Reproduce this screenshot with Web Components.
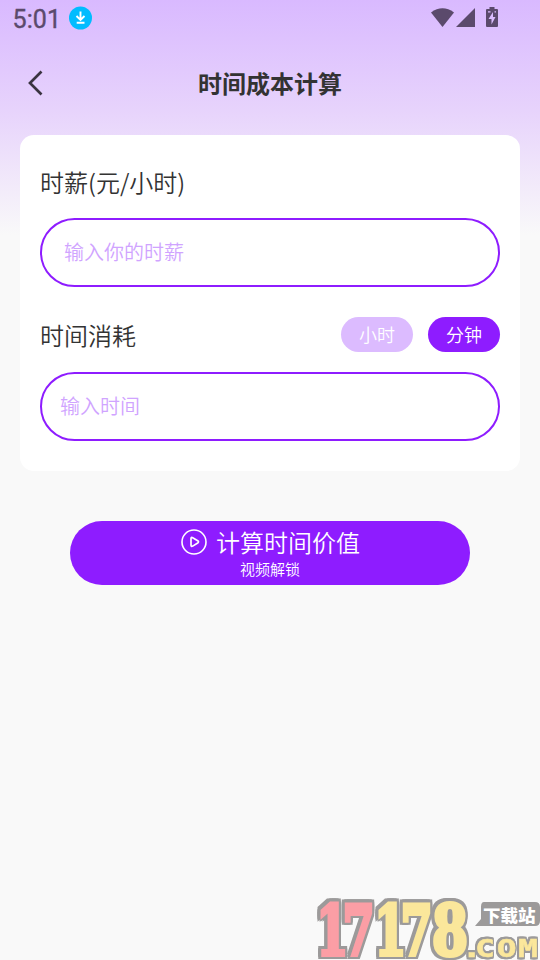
<!DOCTYPE html>
<html lang="zh-CN">
<head>
<meta charset="utf-8">
<title>时间成本计算</title>
<style>
html,body{margin:0;height:100%;overflow:hidden}
body{font-family:Roboto,"Noto Sans CJK SC",sans-serif;color:#333}
</style>
</head>
<body>
<time-cost-page></time-cost-page>
<script>
function define(name, html) {
  const template = document.createElement('template');
  template.innerHTML = html;
  customElements.define(name, class extends HTMLElement {
    constructor() {
      super();
      this.attachShadow({mode: 'open'}).appendChild(template.content.cloneNode(true));
    }
  });
}

define('status-bar', `
<style>
:host{display:flex;align-items:center;height:37px;padding:0 40px 0 12px;box-sizing:border-box;color:#5b4a6c}
.time{font:400 25px/37px Roboto,sans-serif;-webkit-text-stroke:.4px;padding:2px 0 0 .5px;letter-spacing:.1px;width:56.500px}
svg{display:block}
.down{margin-top:-1px}
.right{margin-left:auto;margin-top:-2px}
</style>
<span class="time">5:01</span>
<svg class="down" width="24" height="24" viewBox="0 0 24 24"><circle cx="11.5" cy="12" r="11.5" fill="#00bcff"/><path d="M11.500 5.500v8M7.500 10l4 4 4-4M7.700 16.800h7.800" fill="none" stroke="#fff" stroke-width="1.900"/></svg>
<svg class="right" width="70" height="24" viewBox="430 6 70 24" fill="currentColor"><path d="M431 12.400Q442.500 4 454 12.400L442.500 27Z"/><path d="M475 8v19h-19z"/><path fill-rule="evenodd" d="M489.500 7h5v2h2.500q1 0 1 1v16q0 1-1 1h-10q-1 0-1-1V10q0-1 1-1h2.500zM493 12l-4.500 7h3v5.500l4-7.500h-2.500zM488 11.300v1.300h2.500v-1.300zM494.500 11.300v1.300h1.500v-1.300z"/></svg>`);

define('nav-bar', `
<style>
:host{display:grid;grid-template-columns:72px 1fr 72px;align-items:center;height:92px}
svg{display:block;margin:-1px 0 0 26px}
h1{margin:4px 0 0;text-align:center;font-size:24px;line-height:36px;font-weight:700}
</style>
<svg width="20" height="28" viewBox="0 0 20 28"><path d="M15.500 2.500L4 14l11.500 11.500" fill="none" stroke="#3a3340" stroke-width="2.700"/></svg>
<h1><slot></slot></h1>`);

define('pill-field', `
<style>
:host{display:flex;align-items:center;height:69px;box-sizing:border-box;border:2px solid #8e1cff;border-radius:35px;padding:0 0 2px var(--inset,22px);font-size:20px;color:#d0a4ff;font-weight:350}
</style><slot></slot>`);

define('unit-chip', `
<style>
:host{display:flex;align-items:center;justify-content:center;width:72px;height:35px;box-sizing:border-box;padding-top:3px;border-radius:18px;background:#dcbbff;color:#fff;font-size:18px;line-height:32px;font-weight:350}
:host([selected]){background:#8e1cff}
</style><slot></slot>`);

define('cost-card', `
<style>
:host{display:flex;flex-direction:column;height:336px;margin:6px 20px 0;box-sizing:border-box;padding:29px 20px 30px;background:#fff;border-radius:14px}
.label{font-size:24px;line-height:36px;margin-bottom:18px;font-weight:350;font-family:"Noto Sans CJK SC",sans-serif}
.row{display:flex;align-items:flex-start;gap:15px;height:36px;margin:30px 0 19px}
.row .label{margin:0 auto 0 0}
</style>
<div class="label">时薪(元/小时)</div>
<pill-field>输入你的时薪</pill-field>
<div class="row"><span class="label">时间消耗</span><unit-chip>小时</unit-chip><unit-chip selected>分钟</unit-chip></div>
<pill-field style="--inset:18px">输入时间</pill-field>`);

define('calculate-button', `
<style>
:host{display:flex;flex-direction:column;align-items:center;height:64px;width:400px;margin:50px auto 0;border-radius:32px;background:#8e1cff;color:#fff}
.main{display:flex;align-items:center;gap:10px;font-size:24px;line-height:36px;height:36px;padding-top:5px;font-weight:350}
.sub{font-size:15px;line-height:16px;font-weight:350}
svg{display:block;margin:-4px -1px 0 1px}
</style>
<div class="main"><svg width="26" height="26" viewBox="0 0 26 26" fill="none" stroke="#fff"><circle cx="13" cy="13" r="12" stroke-width="1.600"/><path d="M10 9.700q0-2 1.700-1l5 3.100q1.600 1 0 2.200l-5 3.100q-1.700 1-1.700-1z" stroke-width="1.700"/></svg><slot></slot></div>
<div class="sub"><slot name="note"></slot></div>`);

define('site-mark', `
<style>
:host{position:absolute;left:310px;top:890px;width:230px;height:70px}
svg{display:block}
.mark{filter:drop-shadow(2.500px 0 0 #9c9a9a) drop-shadow(-2.500px 0 0 #9c9a9a) drop-shadow(0 2.500px 0 #9c9a9a) drop-shadow(0 -2.500px 0 #9c9a9a)}
.dom{filter:drop-shadow(1.500px 0 0 #9c9a9a) drop-shadow(-1.500px 0 0 #9c9a9a) drop-shadow(0 2px 0 #9c9a9a) drop-shadow(0 -2px 0 #9c9a9a)}
.mark text{font:700 69px "DejaVu Serif",serif;stroke-width:4}
.dom text{font:700 25px "DejaVu Sans Mono",monospace;stroke-width:.5}
.pink{fill:#fb9ea5;stroke:#fb9ea5}
.gold{fill:#fbe79b;stroke:#fbe79b}
</style>
<svg width="230" height="70" viewBox="0 0 230 70">
<g class="mark">
<text class="pink" transform="translate(0 65) scale(.67 1)" x="9.500 48.500">17</text>
<text class="gold" transform="translate(58 65) scale(.67 1)" x="9.500 48.500">17</text>
<text class="gold" transform="translate(122 65) scale(.75 1)">8</text>
</g>
<path d="M174 12h51q5 0 5 5v14q0 5-5 5h-60l6-7V17q0-5 3-5z" fill="#9c9a9a"/>
<text x="173" y="31.500" font-size="17.500" style="font-family:'Noto Sans CJK SC',sans-serif;font-weight:900" fill="#fff">下载站</text>
<g class="dom"><text class="gold" transform="translate(0 66.500) scale(1.320 1)" x="115 125 141.500 157.500">.COM</text></g>
</svg>`);

define('time-cost-page', `
<style>
:host{display:flow-root;position:relative;height:960px;background:#f9f9f9 linear-gradient(#d9b9ff 0,#e7d3fc 110px,#f9f9f9 235px) no-repeat}
</style>
<status-bar></status-bar>
<nav-bar>时间成本计算</nav-bar>
<cost-card></cost-card>
<calculate-button>计算时间价值<span slot="note">视频解锁</span></calculate-button>
<site-mark></site-mark>`);
</script>
</body>
</html>
